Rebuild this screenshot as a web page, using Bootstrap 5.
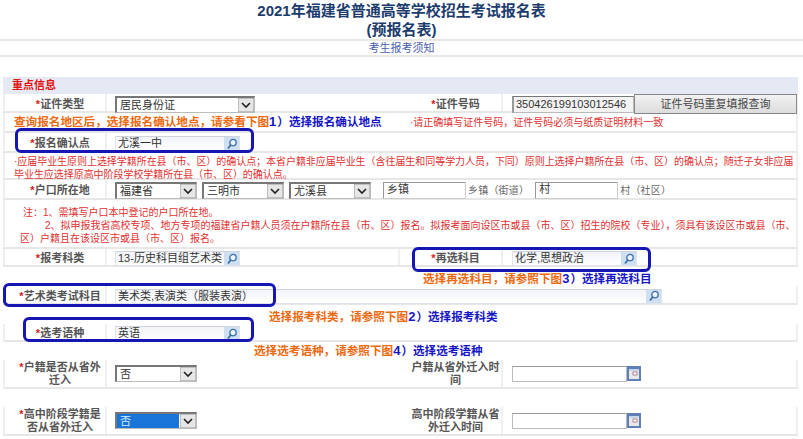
<!DOCTYPE html>
<html lang="zh">
<head>
<meta charset="utf-8">
<title>报名表</title>
<link href="https://cdn.jsdelivr.net/npm/bootstrap@5.3.0/dist/css/bootstrap.min.css" rel="stylesheet">
<style>
html,body{height:439px;overflow:hidden;background:#fff}
body{font-family:"Liberation Sans","Noto Sans CJK SC",sans-serif;font-size:11px;color:#555;line-height:1.15}
.stage{position:relative;width:803px;height:439px}
.ttl{height:41px;padding-top:1px;border-bottom:2px solid #e8e8e8;color:#1d3c6e;font-size:15px;font-weight:700;line-height:19px}
.nlink{height:16px;padding-top:1px;border-bottom:2px solid #e8e8e8;font-size:11px;line-height:13px}
.nlink a{color:#4a62b0;text-decoration:none}
.sheet{margin:20px 5px 0 3px;width:795px}
.band{height:17px;background:#e4e9f3;color:#e31212;font-weight:700;font-size:11px;line-height:17px;padding-left:9px}
.frow{border-bottom:2px solid #e7e7e7;border-right:2px solid #efefef;border-left:2px solid #efefef}
.h-a{height:19px}.h-b{height:20px}.h-d{height:49px}.h-e{height:18px}.h-f{height:29px}
.lab{width:102px;flex:none;text-align:center;padding:3px 0 0 10px;font-weight:700;line-height:13px;border-right:2px solid #f0f0f0;align-self:stretch;display:flex;align-items:center;justify-content:center}
.lab b{color:#d62020}
.lab-r{padding-left:10px;width:103px}
.half{padding:3px 0 0 8px;align-self:stretch;display:flex;align-items:center}
.half-l{width:293px;flex:none}
.half-r{flex:1;padding:3px 0 0 8px;align-self:stretch;display:flex;align-items:center}
.lab-r + .half-r{padding-left:9px}
.h-f .lab,.h-f .half,.h-f .half-r{padding-top:0}
.halfcut{border-right:2px solid #f0f0f0}
.csel{height:17px;padding:0 0 0 3px;font-size:11px;line-height:14px;color:#333;border-radius:0;border:1px solid #bbb;border-top:2px solid #777;border-left:2px solid #777;background-color:#fff;background-image:url("data:image/svg+xml,%3Csvg xmlns='http://www.w3.org/2000/svg' width='16' height='14'%3E%3Crect width='16' height='14' fill='%23e6e6e6' stroke='%23999'/%3E%3Cpath d='M4 5l4 4 4-4' fill='none' stroke='%23222' stroke-width='1.6'/%3E%3C/svg%3E");background-repeat:no-repeat;background-position:right 0 center;background-size:16px 14px;box-shadow:none;font-family:inherit}
.w-140{width:140px}.w-82{width:82px}.w-82b{width:82px;margin-left:5px}
.sel-on{color:#d5ecff;background-image:url("data:image/svg+xml,%3Csvg xmlns='http://www.w3.org/2000/svg' width='16' height='14'%3E%3Crect width='16' height='14' fill='%23e6e6e6' stroke='%23999'/%3E%3Cpath d='M4 5l4 4 4-4' fill='none' stroke='%23222' stroke-width='1.6'/%3E%3C/svg%3E"),linear-gradient(#1874d8,#1874d8);background-position:right 0 center,0 0;background-size:16px 14px,62px 100%}
.ctext{height:17px;padding:0 0 0 2px;font-size:11px;line-height:15px;color:#333;background:#f3f3f3;border:1px solid #bbb;border-top:1px solid #777;border-left:2px solid #999;border-radius:0}
.w-id{width:122px}
.cbtn{width:163px;height:20px;padding:0;font-size:11px;line-height:18px;color:#444;border:1px solid #888;border-radius:0;background:linear-gradient(#f2f2f2,#dcdcdc)}
.look{display:flex;align-items:center;height:15px;background:linear-gradient(#f1f3f8,#fff);font-size:11px;color:#333;border:1px solid #dfe3ec;border-top-color:#cfd3dc}
.look span{flex:1;padding-left:2px;white-space:nowrap;overflow:hidden}
.lens{flex:none;width:15px;height:100%;background:#cfdff2;display:flex;align-items:center;justify-content:center}
.w-125{width:125px}.w-547{width:547px}
.box-in{height:17px;background:#fff;border:1px solid #999;border-right-color:#ccc;border-bottom-color:#ccc;padding:0 0 0 3px;font-size:11px;line-height:13px;color:#333}
.w-83{width:83px;margin-left:12px}.w-83b{width:83px}
.unit{font-size:10px;color:#666;padding:0 2px;line-height:17px;white-space:nowrap;letter-spacing:.2px}
.date{display:flex;align-items:center;width:129px;height:17px}
.date i{flex:1;height:16px;border:1px solid #bbb;border-top-color:#999;background:#fff}
.cal{flex:none;width:14px;height:15px;display:block}
.warn{color:#e33030;font-size:10px;line-height:13px;white-space:nowrap}
.msg-a{padding-left:8px}
.note-a{padding:2px 0 0 9px;height:27px;letter-spacing:-.05px}
.note-b{padding:6px 4px 0 18px;height:49px}
.note-b p{margin:0}
.note-b .ind{padding-left:22px}
.note-b .out{margin-left:-3px}
.tip{font-size:11.6px;font-weight:700;white-space:nowrap;color:#ee6a10;line-height:14px}
.tip em{font-style:normal;color:#1616c8}
.tip u{text-decoration:none;color:#1616c8;font-size:13px;letter-spacing:1px}
.tip-a{padding-left:9px;width:397px;flex:none}
.tip-b{padding-left:420px}.tip-c{padding-left:266px}.tip-d{padding-left:251px}
.mark-box{position:absolute;border:3px solid #1616b4;border-radius:6px;pointer-events:none}
.mb-1{left:15px;top:128px;width:239px;height:25px}
.mb-2{left:412px;top:247px;width:239px;height:25px}
.mb-3{left:3px;top:283px;width:273px;height:24px}
.mb-4{left:23px;top:317px;width:231px;height:25px}
.gaprow{height:18px}
</style>
</head>
<body>
<div class="stage">
  <div class="ttl text-center">2021年福建省普通高等学校招生考试报名表<br>(预报名表)</div>
  <div class="nlink text-center"><a href="#">考生报考须知</a></div>
  <div class="sheet">
    <div class="band">重点信息</div>

    <div class="frow h-a d-flex align-items-center">
      <div class="lab"><span><b>*</b>证件类型</span></div>
      <div class="half half-l"><select class="form-select csel w-140"><option>居民身份证</option></select></div>
      <div class="lab lab-r"><span><b>*</b>证件号码</span></div>
      <div class="half-r"><input class="form-control ctext w-id" value="350426199103012546"><button class="btn cbtn" type="button">证件号码重复填报查询</button></div>
    </div>

    <div class="frow h-b d-flex align-items-center">
      <div class="tip tip-a">查询报名地区后，选择报名确认地点，请参看下图<em><u>1</u>）选择报名确认地点</em></div>
      <div class="warn msg-a">·请正确填写证件号码，证件号码必须与纸质证明材料一致</div>
    </div>

    <div class="frow h-b d-flex align-items-center">
      <div class="lab"><span><b>*</b>报名确认点</span></div>
      <div class="half half-l"><div class="look w-125"><span>尤溪一中</span><div class="lens"><svg width="12" height="12" viewBox="0 0 12 12"><circle cx="7" cy="4.6" r="3.2" fill="#eaf3ff" stroke="#3a6ea8" stroke-width="1.3"/><path d="M4.8 7L2 10.5" stroke="#3a6ea8" stroke-width="1.8"/></svg></div></div></div>
    </div>

    <div class="frow note-a warn">·应届毕业生原则上选择学籍所在县（市、区）的确认点；本省户籍非应届毕业生（含往届生和同等学力人员，下同）原则上选择户籍所在县（市、区）的确认点；随迁子女非应届<br>毕业生应选择原高中阶段学校学籍所在县（市、区）的确认点。</div>

    <div class="frow h-b d-flex align-items-center">
      <div class="lab"><span><b>*</b>户口所在地</span></div>
      <div class="half-r">
        <select class="form-select csel w-82"><option>福建省</option></select>
        <select class="form-select csel w-82b"><option>三明市</option></select>
        <select class="form-select csel w-82b"><option>尤溪县</option></select>
        <div class="box-in w-83">乡镇</div><span class="unit">乡镇（街道）</span>
        <div class="box-in w-83b ms-1">村</div><span class="unit">村（社区）</span>
      </div>
    </div>

    <div class="frow note-b warn">
      <p>注：1、需填写户口本中登记的户口所在地。</p>
      <p class="ind">2、拟申报我省高校专项、地方专项的福建省户籍人员须在户籍所在县（市、区）报名。拟报考面向设区市或县（市、区）招生的院校（专业），须具有该设区市或县（市、</p>
      <p class="out">区）户籍且在该设区市或县（市、区）报名。</p>
    </div>

    <div class="frow h-e d-flex align-items-center">
      <div class="lab"><span><b>*</b>报考科类</span></div>
      <div class="half half-l halfcut"><div class="look w-125"><span>13-历史科目组艺术类</span><div class="lens"><svg width="12" height="12" viewBox="0 0 12 12"><circle cx="7" cy="4.6" r="3.2" fill="#eaf3ff" stroke="#3a6ea8" stroke-width="1.3"/><path d="M4.8 7L2 10.5" stroke="#3a6ea8" stroke-width="1.8"/></svg></div></div></div>
      <div class="lab lab-r"><span><b>*</b>再选科目</span></div>
      <div class="half-r"><div class="look w-125"><span>化学,思想政治</span><div class="lens"><svg width="12" height="12" viewBox="0 0 12 12"><circle cx="7" cy="4.6" r="3.2" fill="#eaf3ff" stroke="#3a6ea8" stroke-width="1.3"/><path d="M4.8 7L2 10.5" stroke="#3a6ea8" stroke-width="1.8"/></svg></div></div></div>
    </div>

    <div class="h-a d-flex align-items-end"><div class="tip tip-b">选择再选科目，请参照下图<em><u>3</u>）选择再选科目</em></div></div>

    <div class="frow h-a d-flex align-items-center">
      <div class="lab"><span><b>*</b>艺术类考试科目</span></div>
      <div class="half-r"><div class="look w-547"><span>美术类,表演类（服装表演）</span><div class="lens"><svg width="12" height="12" viewBox="0 0 12 12"><circle cx="7" cy="4.6" r="3.2" fill="#eaf3ff" stroke="#3a6ea8" stroke-width="1.3"/><path d="M4.8 7L2 10.5" stroke="#3a6ea8" stroke-width="1.8"/></svg></div></div></div>
    </div>

    <div class="h-a d-flex align-items-end"><div class="tip tip-c">选择报考科类，请参照下图<em><u>2</u>）选择报考科类</em></div></div>

    <div class="frow h-e d-flex align-items-center">
      <div class="lab"><span><b>*</b>选考语种</span></div>
      <div class="half-r"><div class="look w-125"><span>英语</span><div class="lens"><svg width="12" height="12" viewBox="0 0 12 12"><circle cx="7" cy="4.6" r="3.2" fill="#eaf3ff" stroke="#3a6ea8" stroke-width="1.3"/><path d="M4.8 7L2 10.5" stroke="#3a6ea8" stroke-width="1.8"/></svg></div></div></div>
    </div>

    <div class="gaprow d-flex align-items-center"><div class="tip tip-d">选择选考语种，请参照下图<em><u>4</u>）选择选考语种</em></div></div>

    <div class="frow h-f d-flex align-items-center">
      <div class="lab"><span><b>*</b>户籍是否从省外<br>迁入</span></div>
      <div class="half half-l"><select class="form-select csel w-82"><option>否</option></select></div>
      <div class="lab lab-r"><span>户籍从省外迁入时<br>间</span></div>
      <div class="half-r"><div class="date"><i></i><svg class="cal" viewBox="0 0 14 15"><rect width="14" height="15" fill="#5f7fb8"/><rect x="2" y="3" width="10" height="10" fill="#e8e8e8"/><rect x="2" y="3" width="10" height="2" fill="#c8d4e8"/><rect x="6" y="6" width="4" height="3" fill="#fff" stroke="#a86a7a" stroke-width=".8"/></svg></div></div>
    </div>

    <div class="gaprow"></div>

    <div class="frow h-f d-flex align-items-center">
      <div class="lab"><span><b>*</b>高中阶段学籍是<br>否从省外迁入</span></div>
      <div class="half half-l"><select class="form-select csel sel-on w-82"><option>否</option></select></div>
      <div class="lab lab-r"><span>高中阶段学籍从省<br>外迁入时间</span></div>
      <div class="half-r"><div class="date"><i></i><svg class="cal" viewBox="0 0 14 15"><rect width="14" height="15" fill="#5f7fb8"/><rect x="2" y="3" width="10" height="10" fill="#e8e8e8"/><rect x="2" y="3" width="10" height="2" fill="#c8d4e8"/><rect x="6" y="6" width="4" height="3" fill="#fff" stroke="#a86a7a" stroke-width=".8"/></svg></div></div>
    </div>
  </div>

  <div class="mark-box mb-1"></div>
  <div class="mark-box mb-2"></div>
  <div class="mark-box mb-3"></div>
  <div class="mark-box mb-4"></div>
</div>
<script src="https://cdn.jsdelivr.net/npm/bootstrap@5.3.0/dist/js/bootstrap.bundle.min.js"></script>
</body>
</html>
